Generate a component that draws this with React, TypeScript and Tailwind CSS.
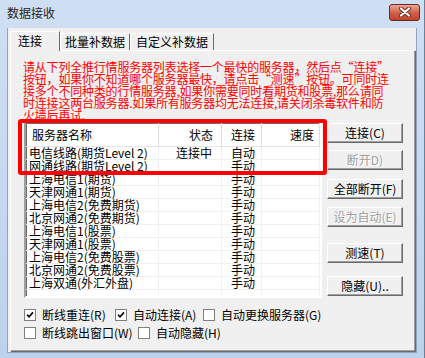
import React from 'react';

const ROWS: [string, string, string][] = [
  ['电信线路(期货Level 2)', '连接中', '自动'],
  ['网通线路(期货Level 2)', '', '手动'],
  ['上海电信1(期货)', '', '手动'],
  ['天津网通1(期货)', '', '手动'],
  ['上海电信2(免费期货)', '', '手动'],
  ['北京网通2(免费期货)', '', '手动'],
  ['上海电信1(股票)', '', '手动'],
  ['天津网通1(股票)', '', '手动'],
  ['上海电信2(免费股票)', '', '手动'],
  ['北京网通2(免费股票)', '', '手动'],
  ['上海双通(外汇外盘)', '', '手动'],
];

const NOTICE = [
  '请从下列全推行情服务器列表选择一个最快的服务器，然后点“连接”',
  '按钮，如果你不知道哪个服务器最快，请点击“测速”按钮。可同时连',
  '接多个不同种类的行情服务器,如果你需要同时看期货和股票,那么请同',
  '时连接这两台服务器.如果所有服务器均无法连接,请关闭杀毒软件和防',
  '火墙后再试.',
];

const Btn = ({ label, disabled, className = '' }: { label: string; disabled?: boolean; className?: string }) => (
  <div
    className={`h-[20px] w-[76px] flex items-center justify-center bg-[#f0f0f0] border border-t-white border-l-white border-r-[#696969] border-b-[#696969] shadow-[inset_-1px_-1px_#a0a0a0] ${
      disabled ? 'text-[#a0a0a0] [text-shadow:1px_1px_#ffffff]' : 'text-black'
    } ${className}`}
  >
    {label}
  </div>
);

const Check = ({ checked, label, w }: { checked?: boolean; label: string; w: string }) => (
  <div className={`flex items-center h-[13px] ${w}`}>
    <div className="w-[12px] h-[12px] bg-white border border-[#808080] flex items-center justify-center shrink-0">
      {checked && (
        <svg width="8" height="8" viewBox="0 0 8 8">
          <path d="M1 3.8 L3 5.8 L7 1.4" fill="none" stroke="#000" strokeWidth="1.6" />
        </svg>
      )}
    </div>
    <span className="ml-[6px] whitespace-nowrap">{label}</span>
  </div>
);

export default function App() {
  return (
    <div className="relative w-[425px] h-[358px] overflow-hidden bg-gradient-to-b from-[#cfdff3] to-[#bdd2ec] font-['Noto_Sans_CJK_SC',sans-serif] text-[12px] leading-[12px] text-black border-r border-[#6d7f94]">
      {/* title bar */}
      <div className="h-[28px] flex items-center justify-between pl-[7px] pr-[4px]">
        <span className="text-[#1e1e1e] -mt-[2px]">数据接收</span>
        <div className="w-[31px] h-[17px] -mt-[4px] rounded-[3px] border border-[#6e2a1f] bg-gradient-to-b from-[#e9a898] via-[#d0624c] to-[#c0402a] flex items-center justify-center">
          <svg width="14" height="10" viewBox="0 0 14 10">
            <path d="M3 1.5 L11 8.5 M11 1.5 L3 8.5" stroke="#6b2b22" strokeWidth="4" strokeLinecap="round" />
            <path d="M3 1.5 L11 8.5 M11 1.5 L3 8.5" stroke="#ffffff" strokeWidth="2.2" strokeLinecap="round" />
          </svg>
        </div>
      </div>

      {/* client area */}
      <div className="ml-[7px] w-[410px] h-[325px] bg-[#f0f0f0] border-l border-r border-b border-[#8fa4bd] pt-[3px] pl-[2px]">
        {/* tabs */}
        <div className="flex items-end h-[19px]">
          <div className="relative z-10 w-[50px] h-[20px] -mb-[1px] pl-[7px] pt-[3px] bg-[#f0f0f0] border-t border-l border-white border-r border-r-[#696969]">
            连接
          </div>
          <div className="w-[70px] h-[17px] flex items-center justify-center border-t border-l border-white border-r border-r-[#696969]">
            批量补数据
          </div>
          <div className="w-[84px] h-[17px] flex items-center justify-center border-t border-l border-white border-r border-r-[#696969]">
            自定义补数据
          </div>
        </div>

        {/* panel */}
        <div className="w-[405px] h-[301px] border border-t-white border-l-white border-r-[#a0a0a0] border-b-[#a0a0a0] shadow-[1px_1px_0_#696969] pt-[10px] pl-[12px]">
          <div className="text-[#ff0000]">
            {NOTICE.map(line => (
              <div key={line} className="h-[12px] whitespace-nowrap tracking-[-0.2px]">
                {line}
              </div>
            ))}
          </div>

          <div className="flex">
            {/* server list */}
            <div className="ml-[1px] w-[298px] h-[177px] flex flex-col bg-white border-2 border-t-[#a0a0a0] border-l-[#a0a0a0] border-r-white border-b-white shadow-[inset_1px_1px_#696969]">
              <div className="h-[24px] grid grid-cols-[133px_63px_40px_58px] border-b border-[#e5e5e5] shrink-0">
                <div className="flex items-center pl-[6px] border-r border-[#dcdcdc]">服务器名称</div>
                <div className="flex items-center justify-end pr-[8px] border-r border-[#dcdcdc]">状态</div>
                <div className="flex items-center pl-[9px] border-r border-[#dcdcdc]">连接</div>
                <div className="flex items-center justify-end pr-[5px] border-r border-[#dcdcdc]">速度</div>
              </div>
              {ROWS.map(([name, state, mode]) => (
                <div key={name} className="h-[13px] grid grid-cols-[133px_63px_40px_58px] border-b border-[#f0f0f0] shrink-0">
                  <div className="pl-[3px] whitespace-nowrap border-r border-[#f0f0f0]">{name}</div>
                  <div className="text-right pr-[9px] border-r border-[#f0f0f0]">{state}</div>
                  <div className="pl-[9px] border-r border-[#f0f0f0]">{mode}</div>
                  <div className="border-r border-[#f0f0f0]" />
                </div>
              ))}
              <div className="flex-1 grid grid-cols-[133px_63px_40px_58px]">
                <div className="border-r border-[#f0f0f0]" />
                <div className="border-r border-[#f0f0f0]" />
                <div className="border-r border-[#f0f0f0]" />
                <div className="border-r border-[#f0f0f0]" />
              </div>
            </div>

            {/* buttons */}
            <div className="ml-[5px] pt-[2px] flex flex-col">
              <Btn label="连接(C)" />
              <Btn label="断开D)" disabled className="mt-[7px]" />
              <Btn label="全部断开(F)" className="mt-[9px]" />
              <Btn label="设为自动(E)" disabled className="mt-[8px]" />
              <Btn label="测速(T)" className="mt-[16px]" />
              <Btn label="隐藏(U).." className="mt-[13px]" />
            </div>
          </div>

          {/* options */}
          <div className="ml-[1px] mt-[10px] flex flex-col gap-[5px]">
            <div className="flex">
              <Check checked label="断线重连(R)" w="w-[91px]" />
              <Check checked label="自动连接(A)" w="w-[88px]" />
              <Check label="自动更换服务器(G)" w="w-[120px]" />
            </div>
            <div className="flex">
              <Check label="断线跳出窗口(W)" w="w-[114px]" />
              <Check label="自动隐藏(H)" w="w-[90px]" />
            </div>
          </div>
        </div>
      </div>

      {/* red annotation box */}
      <div className="absolute left-[18px] top-[119px] w-[309px] h-[56px] border-[4px] border-[#ff0000] rounded-[3px] pointer-events-none" />
    </div>
  );
}
